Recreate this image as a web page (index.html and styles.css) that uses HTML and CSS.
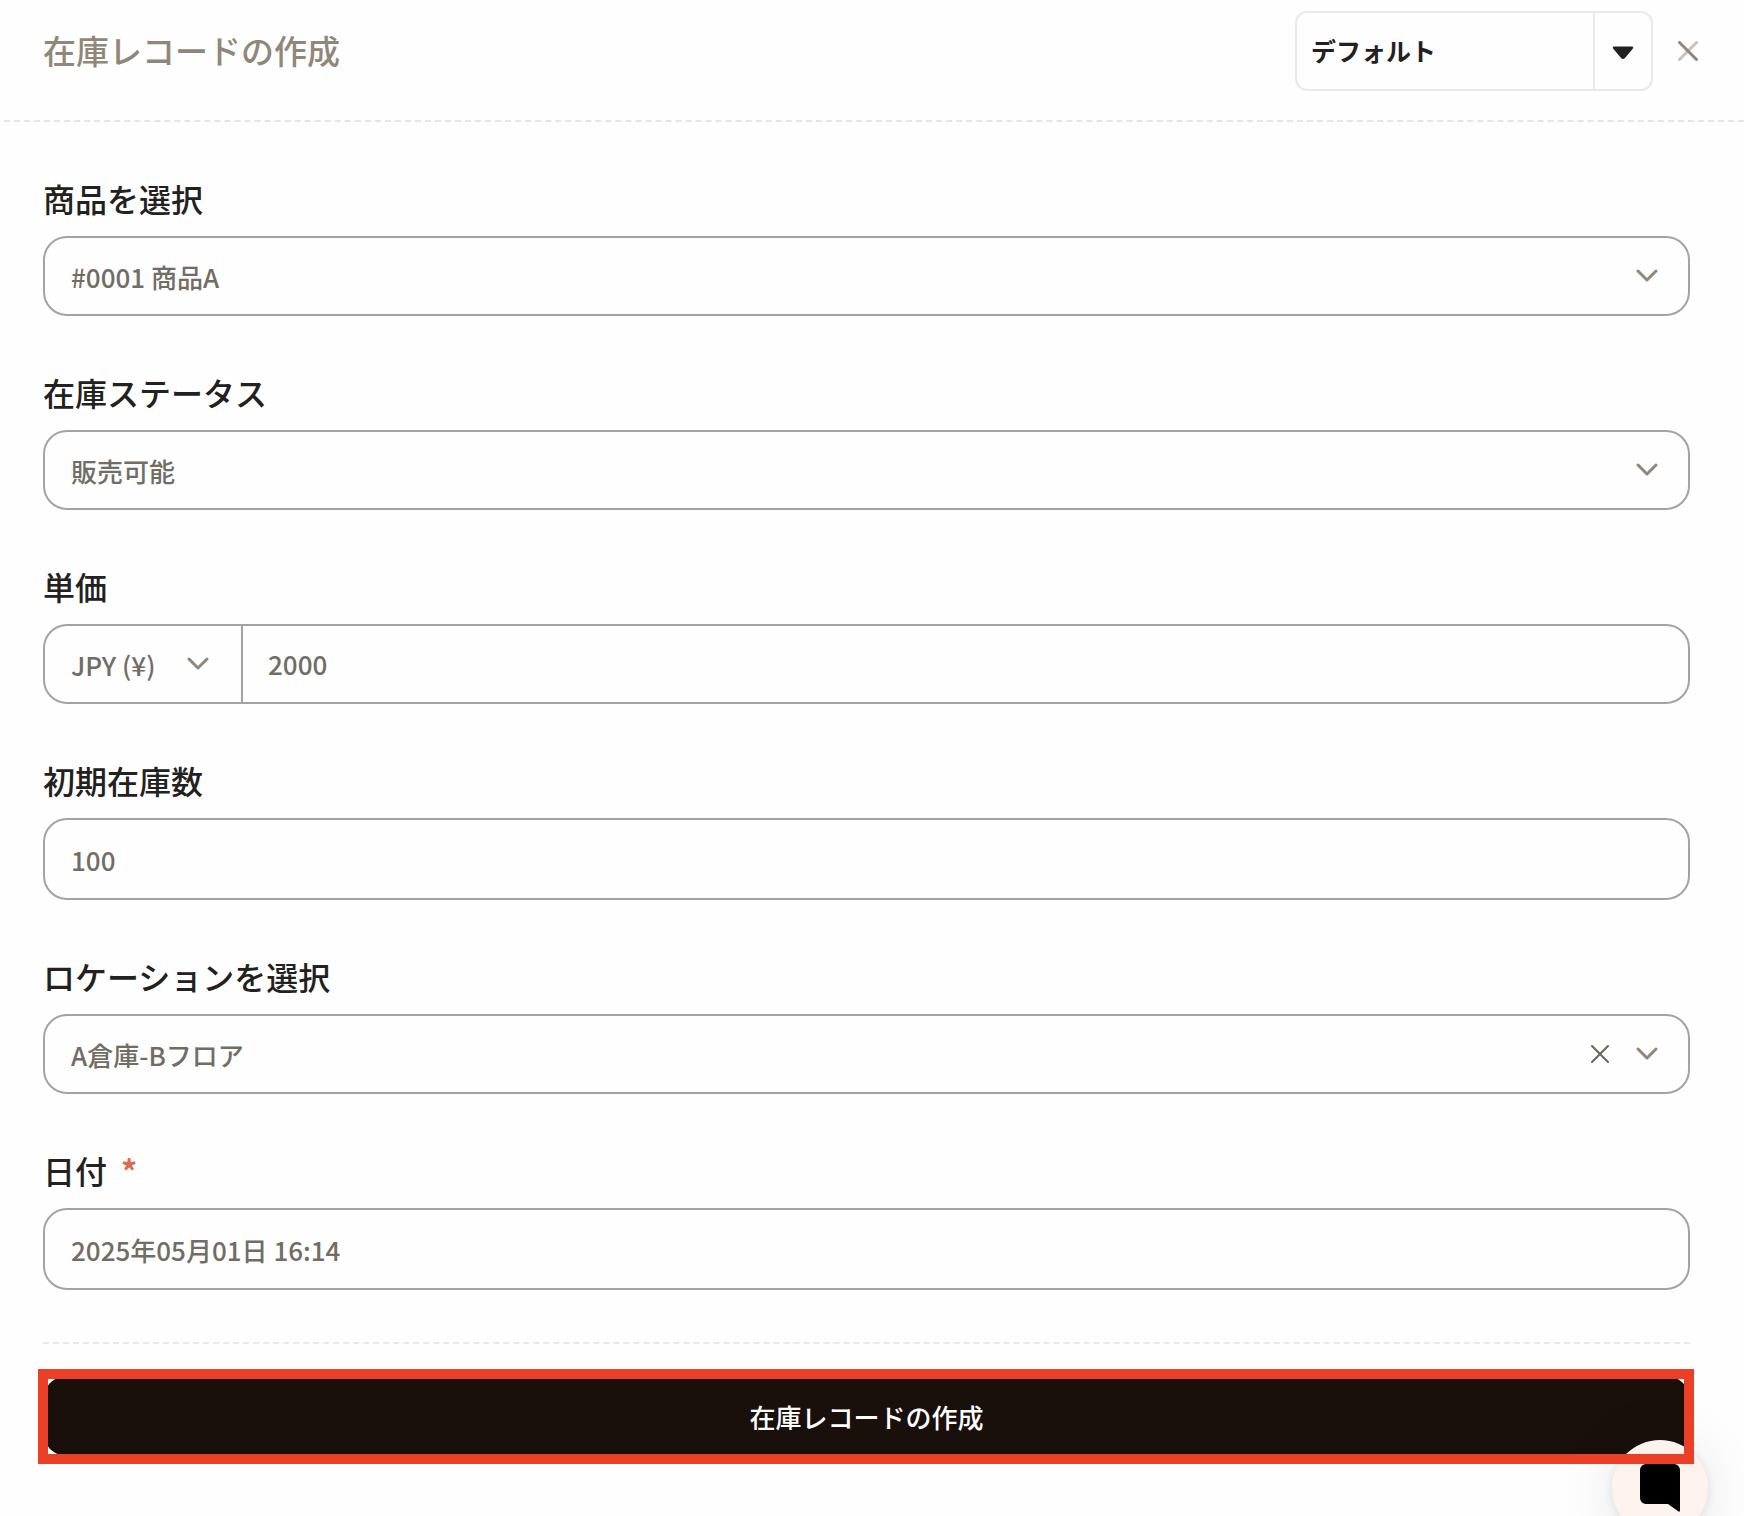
FILE: index.html
```html
<!DOCTYPE html>
<html lang="ja">
<head>
<meta charset="utf-8">
<meta name="viewport" content="width=device-width, initial-scale=1">
<title>在庫レコードの作成</title>
<link rel="stylesheet" href="styles.css">
</head>
<body>
<header class="header">
  <h1 class="title">在庫レコードの作成</h1>
  <div class="header-actions">
    <div class="split">
      <button type="button" class="split-main">デフォルト</button>
      <button type="button" class="split-toggle" aria-label="テンプレートを選択">
        <svg width="22" height="14" viewBox="0 0 22 14" aria-hidden="true"><path d="M2 1.800h18L12 11.300q-1 .9-2 0z" fill="#22211d" stroke="#22211d" stroke-width="2.500" stroke-linejoin="round"/></svg>
      </button>
    </div>
    <button type="button" class="close" aria-label="閉じる">
      <svg width="20" height="20" viewBox="0 0 20 20" fill="none" stroke="#8f8879" stroke-width="3" stroke-linecap="round" aria-hidden="true"><path d="M18.500 1.500l-17 17" opacity=".5"/><path d="M1.500 1.500l17 17"/></svg>
    </button>
  </div>
</header>
<form class="form">
  <div class="field">
    <label class="label" for="product">商品を選択</label>
    <div class="control">
      <select id="product" class="input"><option>#0001 商品A</option></select>
      <svg class="chevron" viewBox="0 0 22 14" aria-hidden="true"><path d="M2 2l9 9 9-9"/></svg>
    </div>
  </div>
  <div class="field">
    <label class="label" for="status">在庫ステータス</label>
    <div class="control">
      <select id="status" class="input"><option>販売可能</option></select>
      <svg class="chevron" viewBox="0 0 22 14" aria-hidden="true"><path d="M2 2l9 9 9-9"/></svg>
    </div>
  </div>
  <div class="field">
    <label class="label" for="price">単価</label>
    <div class="price">
      <div class="control">
        <select class="input currency" aria-label="通貨"><option>JPY (¥)</option></select>
        <svg class="chevron" viewBox="0 0 22 14" aria-hidden="true"><path d="M2 2l9 9 9-9"/></svg>
      </div>
      <input id="price" class="input amount" type="text" inputmode="numeric" value="2000">
    </div>
  </div>
  <div class="field">
    <label class="label" for="quantity">初期在庫数</label>
    <input id="quantity" class="input tall" type="text" inputmode="numeric" value="100">
  </div>
  <div class="field">
    <label class="label" for="location">ロケーションを選択</label>
    <div class="control">
      <select id="location" class="input"><option>A倉庫-Bフロア</option></select>
      <button type="button" class="clear" aria-label="選択を解除">
        <svg width="20" height="20" viewBox="0 0 20 20" fill="none" stroke="#6b665c" stroke-width="2" stroke-linecap="round" aria-hidden="true"><path d="M2 2l16 16M18 2L2 18"/></svg>
      </button>
      <svg class="chevron" viewBox="0 0 22 14" aria-hidden="true"><path d="M2 2l9 9 9-9"/></svg>
    </div>
  </div>
  <div class="field">
    <label class="label" for="date">日付<span class="required">*</span></label>
    <input id="date" class="input tall" type="text" value="2025年05月01日 16:14">
  </div>
  <div class="footer">
    <div class="highlight">
      <button type="submit" class="submit">在庫レコードの作成</button>
    </div>
  </div>
</form>
<button type="button" class="chat" aria-label="チャットを開く">
  <svg width="42" height="50" viewBox="0 0 42 50" aria-hidden="true"><path d="M7 1h28a6 6 0 0 1 6 6v40.500q0 1.500-1.500 1L29 41H7a6 6 0 0 1-6-6V7a6 6 0 0 1 6-6z"/></svg>
</button>
</body>
</html>
```
FILE: styles.css
```css
*, *::before, *::after {
  box-sizing: border-box;
}

body {
  margin: 0;
  background: #fefefe;
  color: #22211d;
  font-family: "Noto Sans CJK JP", sans-serif;
  font-weight: 500;
}

button, input, select {
  margin: 0;
  font: inherit;
  color: inherit;
}

button {
  padding: 0;
  border: 0;
  background: none;
  cursor: pointer;
}

svg {
  display: block;
}

.header {
  display: flex;
  align-items: center;
  justify-content: space-between;
  margin-left: 4px;
  padding: 11px 46px 29px 39px;
  border-bottom: 2px dashed #e6e5df;
}

.title {
  margin: 0;
  padding-bottom: 2px;
  font-size: 33px;
  font-weight: 500;
  line-height: 48px;
  color: #8f8879;
}

.header-actions {
  display: flex;
  align-items: center;
  gap: 25px;
}

.split {
  display: flex;
  height: 80px;
  border: 2px solid #e9e9e9;
  border-radius: 12px;
}

.split-main {
  width: 296px;
  padding: 0 14px 2px;
  font-size: 25px;
  font-weight: 700;
  text-align: left;
}

.split-toggle {
  display: grid;
  place-items: center;
  width: 58px;
  padding-top: 4px;
  border-left: 2px solid #e9e9e9;
}

.form {
  display: flex;
  flex-direction: column;
  gap: 54px;
  padding: 54px 54px 60px 43px;
}

.field {
  display: flex;
  flex-direction: column;
  gap: 16px;
}

.label {
  font-size: 32px;
  line-height: 44px;
}

.required {
  margin-left: 14px;
  font-weight: 700;
  color: #dc6b50;
}

.control {
  display: grid;
  grid-template-columns: 1fr auto auto;
  align-items: center;
  column-gap: 26px;
}

.input {
  grid-area: 1 / 1 / 2 / -1;
  width: 100%;
  height: 80px;
  padding: 0 26px;
  border: 2px solid #a3a3a3;
  border-radius: 24px;
  background: #fefefe;
  color: #716d64;
  font-size: 26px;
  appearance: none;
  outline: none;
}

.tall {
  height: 82px;
}

.chevron {
  grid-area: 1 / 3;
  width: 22px;
  height: 14px;
  margin-right: 32px;
  fill: none;
  stroke: #8f8879;
  stroke-width: 3;
  stroke-linecap: round;
  stroke-linejoin: round;
  pointer-events: none;
}

.clear {
  grid-area: 1 / 2;
}

.price {
  display: grid;
  grid-template-columns: 198px 1fr;
}

.currency {
  border-right: 0;
  border-radius: 24px 0 0 24px;
}

.amount {
  grid-area: auto;
  padding: 0 25px 2px;
  border-radius: 0 24px 24px 0;
}

.footer {
  margin-top: -2px;
  padding-top: 32px;
  border-top: 2px dashed #e9e9e9;
}

.highlight {
  position: relative;
}

.highlight::after {
  content: "";
  position: absolute;
  z-index: 2;
  inset: -7px -4px -8px -5px;
  border: 10px solid #eb4026;
  pointer-events: none;
}

.submit {
  display: block;
  width: 100%;
  height: 80px;
  border-radius: 24px;
  background: #19100b;
  color: #fff;
  font-size: 26px;
}

.chat {
  position: fixed;
  z-index: 1;
  right: 36px;
  bottom: -20px;
  display: grid;
  place-items: center;
  width: 96px;
  height: 96px;
  border-radius: 50%;
  background: #fdf2ee;
  box-shadow: 0 2px 12px rgba(0, 0, 0, .1), 0 4px 60px rgba(0, 0, 0, .1);
}
```
